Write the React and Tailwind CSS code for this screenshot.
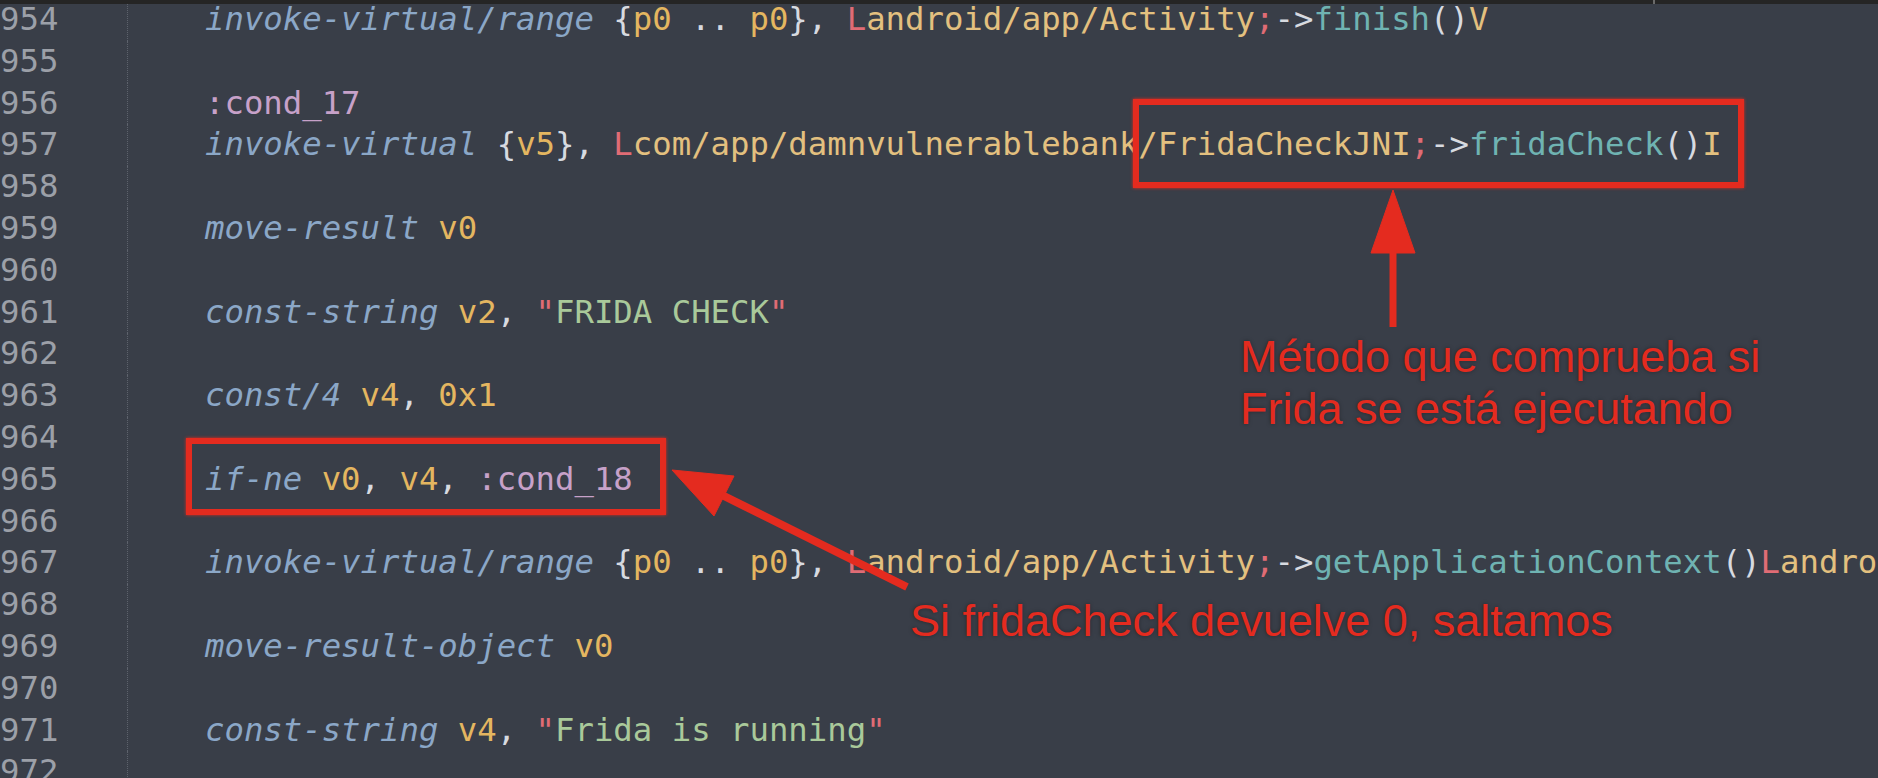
import React from 'react';

// token colours
const INS = 'italic text-[#8ba7c7]';
const REG = 'text-[#e4b660]';
const CLS = 'text-[#e3c07f]';
const PUN = 'text-[#d7dae0]';
const RED = 'text-[#e06c75]';
const MTH = 'text-[#6fb3b2]';
const LBL = 'text-[#c7a1c9]';
const STR = 'text-[#a9c99a]';

const rangeCall = (method, ret) => [
  ['invoke-virtual/range', INS],
  [' {', PUN],
  ['p0', REG],
  [' .. ', PUN],
  ['p0', REG],
  ['}, ', PUN],
  ['L', RED],
  ['android/app/Activity', CLS],
  [';', RED],
  ['->', PUN],
  [method, MTH],
  ['()', PUN],
  ...ret,
];

const lines = [
  { n: 954, t: rangeCall('finish', [['V', CLS]]) },
  { n: 955, t: [] },
  { n: 956, t: [[':cond_17', LBL]] },
  {
    n: 957,
    t: [
      ['invoke-virtual', INS],
      [' {', PUN],
      ['v5', REG],
      ['}, ', PUN],
      ['L', RED],
      ['com/app/damnvulnerablebank/FridaCheckJNI', CLS],
      [';', RED],
      ['->', PUN],
      ['fridaCheck', MTH],
      ['()', PUN],
      ['I', CLS],
    ],
  },
  { n: 958, t: [] },
  { n: 959, t: [['move-result', INS], [' v0', REG]] },
  { n: 960, t: [] },
  {
    n: 961,
    t: [
      ['const-string', INS],
      [' v2', REG],
      [', ', PUN],
      ['"', RED],
      ['FRIDA CHECK', STR],
      ['"', RED],
    ],
  },
  { n: 962, t: [] },
  { n: 963, t: [['const/4', INS], [' v4', REG], [', ', PUN], ['0x1', REG]] },
  { n: 964, t: [] },
  {
    n: 965,
    t: [
      ['if-ne', INS],
      [' v0', REG],
      [', ', PUN],
      ['v4', REG],
      [', ', PUN],
      [':cond_18', LBL],
    ],
  },
  { n: 966, t: [] },
  {
    n: 967,
    t: rangeCall('getApplicationContext', [
      ['L', RED],
      ['android/content/Context', CLS],
      [';', RED],
    ]),
  },
  { n: 968, t: [] },
  { n: 969, t: [['move-result-object', INS], [' v0', REG]] },
  { n: 970, t: [] },
  {
    n: 971,
    t: [
      ['const-string', INS],
      [' v4', REG],
      [', ', PUN],
      ['"', RED],
      ['Frida is running', STR],
      ['"', RED],
    ],
  },
  { n: 972, t: [] },
];

export default function App() {
  return (
    <div className="relative w-[1878px] h-[778px] overflow-hidden bg-[#393e48]">
      {/* Code */}
      <div className="-mt-px font-['DejaVu_Sans_Mono',monospace] text-[32.3px] leading-[41.8px] whitespace-pre">
        {lines.map((line) => (
          <div key={line.n} className="flex h-[41.8px]">
            <div className="w-[127px] shrink-0 text-[#9ca0a8]">{line.n}</div>
            <div className="w-px shrink-0 border-l border-dotted border-[#5d626c]"></div>
            <div className="pl-[77px]">
              {line.t.map(([txt, cls], i) => (
                <span key={i} className={cls}>{txt}</span>
              ))}
            </div>
          </div>
        ))}
      </div>

      {/* Tab bar edge */}
      <div className="absolute top-0 left-0 right-0 h-[4px] bg-[#252525]">
        <div className="absolute left-[1653px] top-0 h-[4px] w-[2px] bg-[#6a6a6a]"></div>
      </div>

      {/* Highlight boxes */}
      <div className="absolute left-[1133px] top-[99px] w-[611px] h-[89px] border-[6px] border-[#e42b1f] shadow-[0_0_3px_#e42b1f]"></div>
      <div className="absolute left-[186px] top-[438px] w-[480px] h-[77px] border-[6px] border-[#e42b1f] shadow-[0_0_3px_#e42b1f]"></div>

      {/* Arrows */}
      <svg className="absolute inset-0 pointer-events-none" width="1878" height="778">
        <g fill="#e42b1f" stroke="#e42b1f">
          <polygon points="1393,190 1371,253 1415,253" strokeWidth="1" />
          <line x1="1393" y1="250" x2="1393" y2="327" strokeWidth="7" />
          <polygon points="672,470 714,516 734,476" strokeWidth="1" />
          <line x1="722" y1="495" x2="907" y2="587" strokeWidth="8" />
        </g>
      </svg>

      {/* Notes */}
      <div className="absolute left-[1240px] top-[331px] font-['Liberation_Sans',Arial,sans-serif] text-[45px] leading-[52px] text-[#e42b1f] [text-shadow:0_0_4px_rgba(0,0,0,0.35)]">
        <div>Método que comprueba si</div>
        <div>Frida se está ejecutando</div>
      </div>
      <div className="absolute left-[910px] top-[595px] font-['Liberation_Sans',Arial,sans-serif] text-[45px] leading-[52px] text-[#e42b1f] [text-shadow:0_0_4px_rgba(0,0,0,0.35)]">
        Si fridaCheck devuelve 0, saltamos
      </div>
    </div>
  );
}
